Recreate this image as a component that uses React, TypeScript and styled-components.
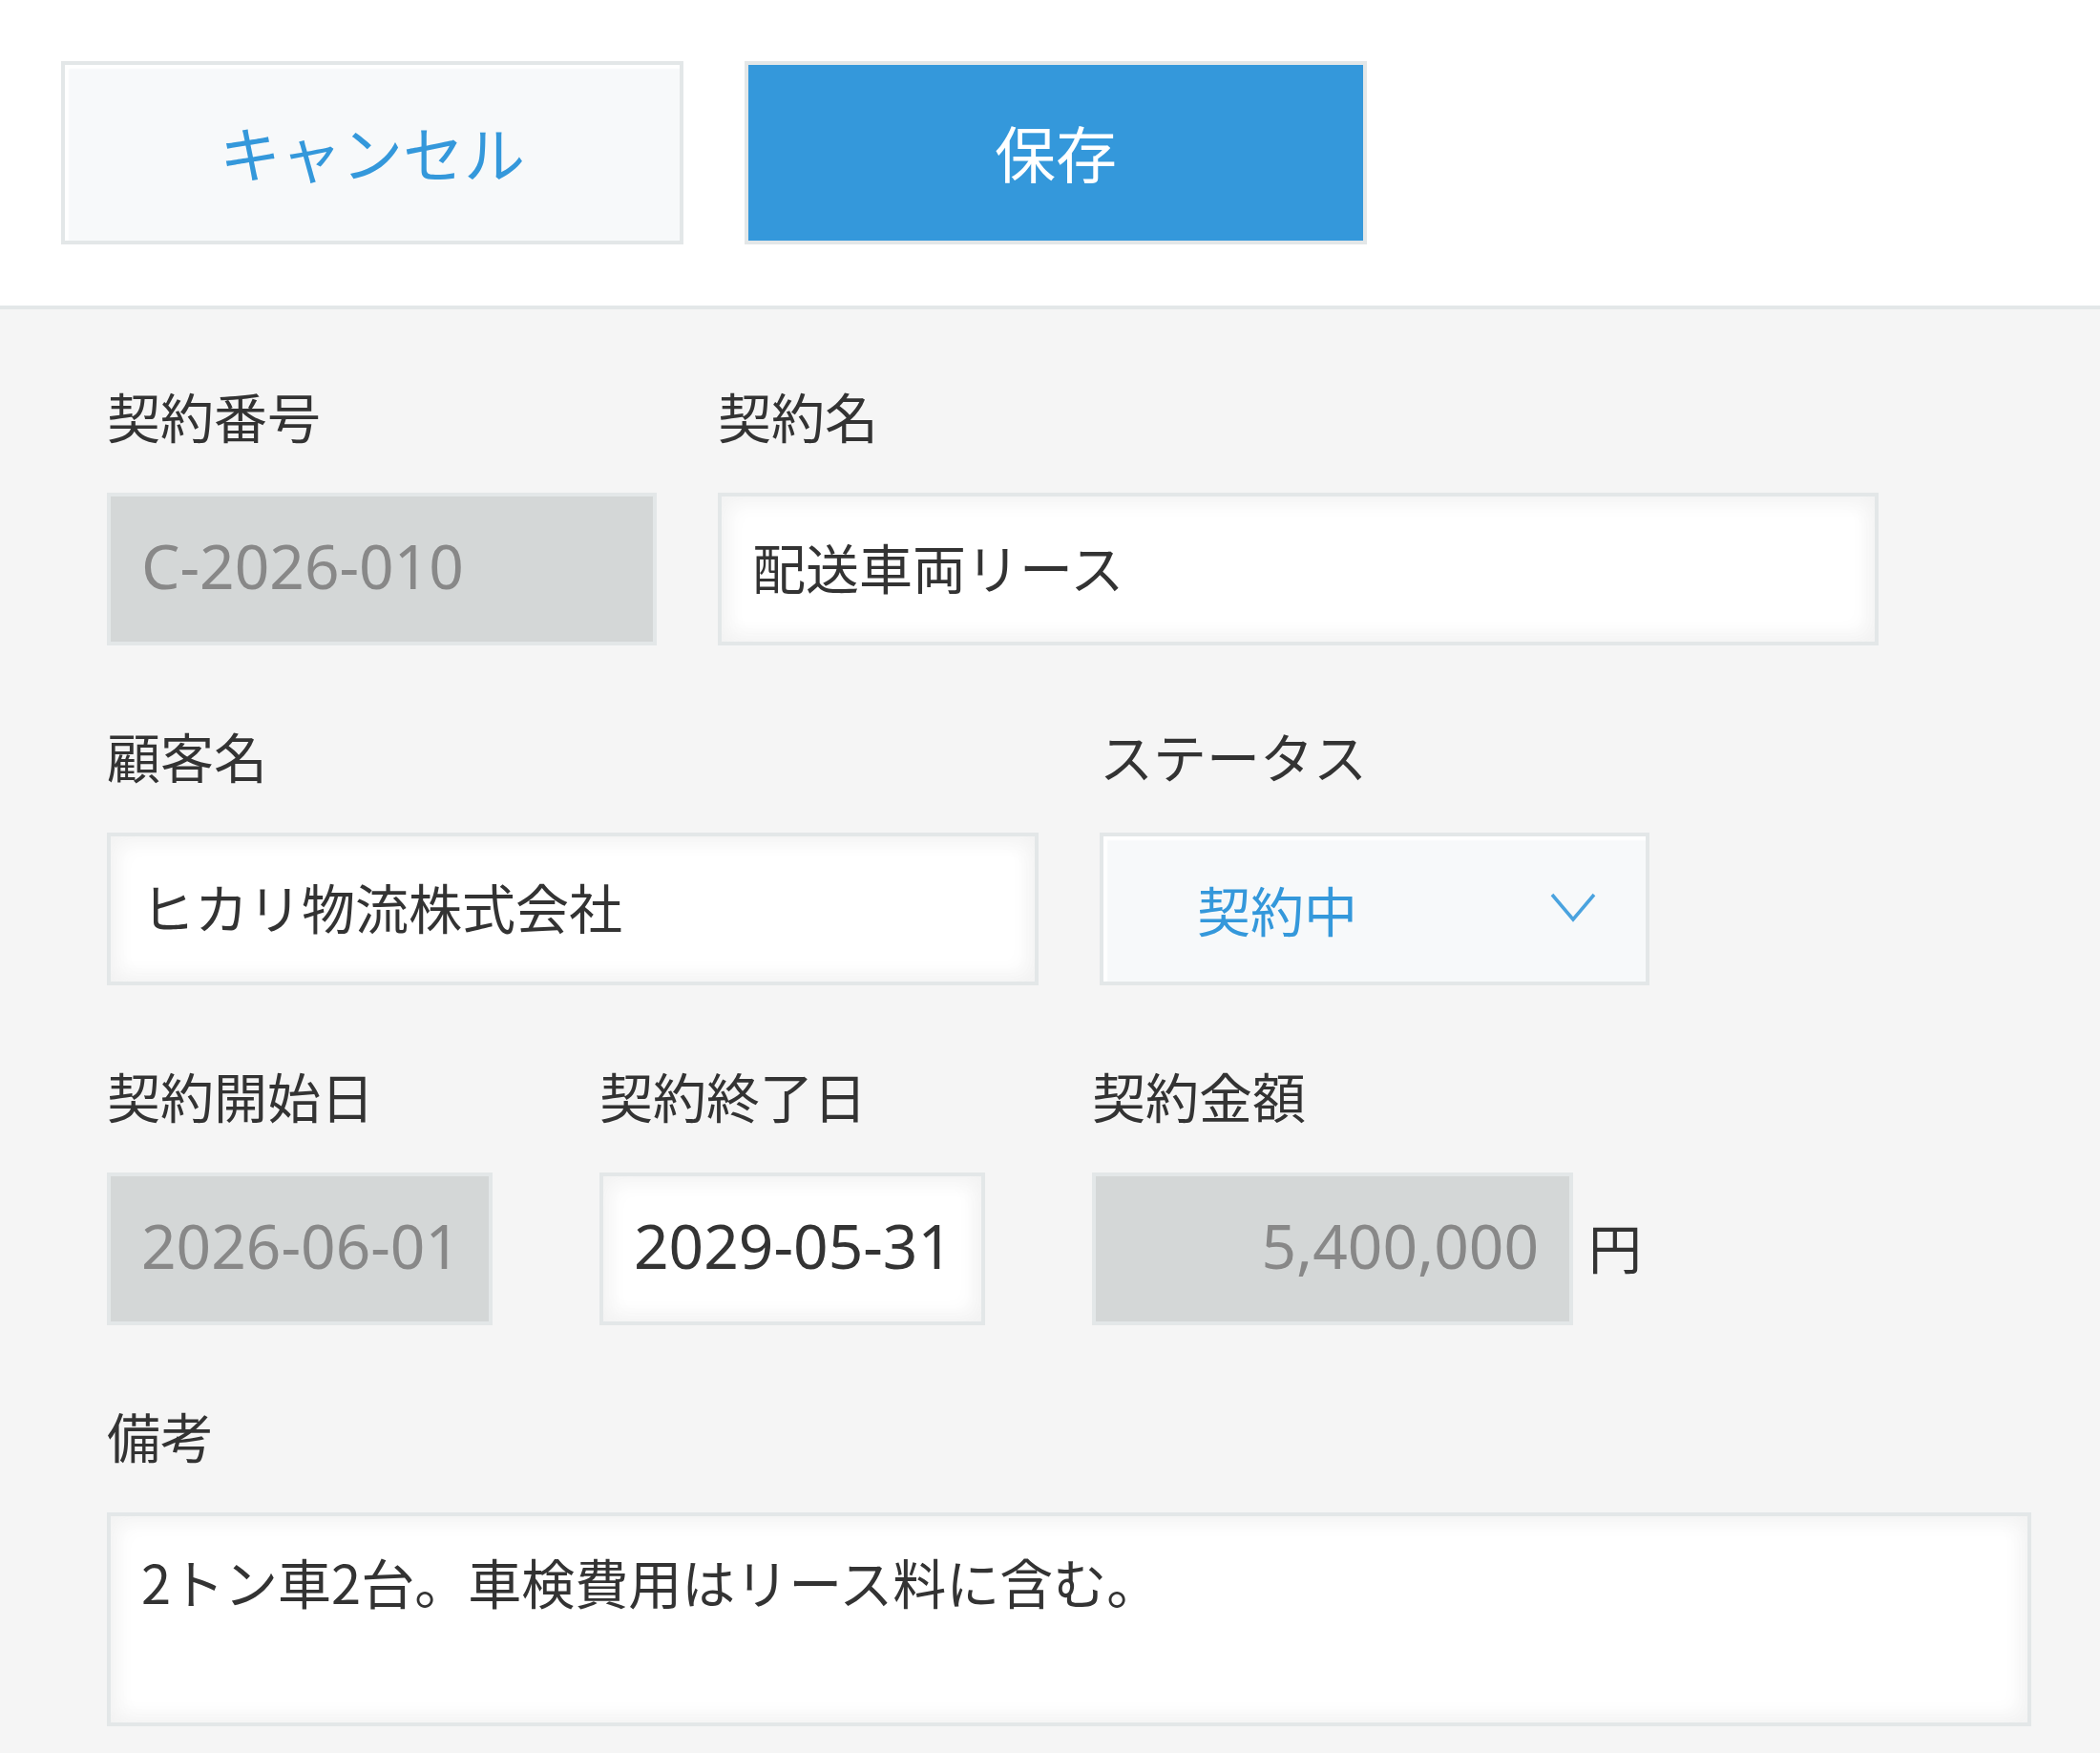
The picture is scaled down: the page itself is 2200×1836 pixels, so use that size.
import { createGlobalStyle, styled } from "styled-components";

const GlobalStyle = createGlobalStyle`
  html, body {
    margin: 0;
    padding: 0;
  }
  body {
    background: #f5f5f5;
    font-family: "Noto Sans CJK JP", "Noto Sans", sans-serif;
    color: #333;
  }
`;

const Page = styled.div`
  width: 2200px;
  min-height: 1836px;
  background: #f5f5f5;
`;

const Toolbar = styled.div`
  display: flex;
  gap: 64px;
  height: 324px;
  box-sizing: border-box;
  padding: 64px 0 0 64px;
  background: #fff;
  border-bottom: 4px solid #e3e7e8;
`;

const ToolButton = styled.button<{ $primary?: boolean }>`
  width: 652px;
  height: 192px;
  box-sizing: border-box;
  padding: 0 0 4px;
  border: 4px solid #e3e7e8;
  background: ${(p) => (p.$primary ? "#3498db" : "#f7f9fa")};
  color: ${(p) => (p.$primary ? "#fff" : "#3498db")};
  box-shadow: ${(p) => (p.$primary ? "none" : "inset 4px 4px 2px #fff")};
  font-family: "Noto Sans CJK JP", sans-serif;
  font-size: 64px;
  line-height: 1;
  cursor: pointer;
`;

const Form = styled.div`
  display: flex;
  flex-direction: column;
  gap: 76px;
  padding: 72px 0 28px 112px;
`;

const Row = styled.div`
  display: flex;
  align-items: flex-start;
  gap: 64px;
`;

const Field = styled.div<{ $width?: number }>`
  display: flex;
  flex-direction: column;
  gap: 36px;
  width: ${(p) => (p.$width ? `${p.$width}px` : "auto")};
`;

const Label = styled.div`
  font-size: 56px;
  line-height: 78px;
  padding-bottom: 6px;
  color: #333;
  white-space: nowrap;
`;

const Control = styled.div`
  display: flex;
  align-items: center;
`;

const Input = styled.div<{ $width: number; $readonly?: boolean; $numeric?: boolean; $right?: boolean }>`
  display: flex;
  align-items: center;
  justify-content: ${(p) => (p.$right ? "flex-end" : "flex-start")};
  width: ${(p) => p.$width}px;
  height: 160px;
  box-sizing: border-box;
  padding: 0 32px 8px;
  border: 4px solid #e3e7e8;
  background: ${(p) => (p.$readonly ? "#d4d7d7" : "#fff")};
  color: ${(p) => (p.$readonly ? "#888" : "#333")};
  box-shadow: ${(p) =>
    p.$readonly
      ? "none"
      : "inset 4px 4px 24px #f2f2f2, inset -4px -4px 24px #f2f2f2"};
  font-family: ${(p) =>
    p.$numeric ? '"Noto Sans", "Noto Sans CJK JP", sans-serif' : '"Noto Sans CJK JP", sans-serif'};
  font-size: ${(p) => (p.$numeric ? "64px" : "56px")};
  white-space: nowrap;
`;

const Select = styled.div`
  display: flex;
  align-items: center;
  justify-content: space-between;
  width: 576px;
  height: 160px;
  box-sizing: border-box;
  padding: 0 52px 2px 98px;
  border: 4px solid #e3e7e8;
  background: #f7f9fa;
  box-shadow: inset 4px 4px 2px #fff;
  color: #3498db;
  font-size: 56px;
`;

const Unit = styled.span`
  margin-left: 16px;
  padding-bottom: 8px;
  font-size: 56px;
  color: #333;
`;

const TextArea = styled.div`
  width: 2016px;
  height: 224px;
  box-sizing: border-box;
  padding: 26px 32px 32px;
  border: 4px solid #e3e7e8;
  background: #fff;
  box-shadow: inset 4px 4px 24px #f2f2f2, inset -4px -4px 24px #f2f2f2;
  font-size: 56px;
  line-height: 84px;
  color: #333;
`;

function Chevron() {
  return (
    <svg width="48" height="32" viewBox="0 0 48 32">
      <polyline
        points="2,2 24,28 46,2"
        fill="none"
        stroke="#4aa3df"
        strokeWidth="3.5"
      />
    </svg>
  );
}

export default function App() {
  return (
    <Page>
      <GlobalStyle />
      <Toolbar>
        <ToolButton>キャンセル</ToolButton>
        <ToolButton $primary>保存</ToolButton>
      </Toolbar>
      <Form>
        <Row>
          <Field>
            <Label>契約番号</Label>
            <Input $width={576} $readonly $numeric>
              C-2026-010
            </Input>
          </Field>
          <Field>
            <Label>契約名</Label>
            <Input $width={1216}>配送車両リース</Input>
          </Field>
        </Row>
        <Row>
          <Field>
            <Label>顧客名</Label>
            <Input $width={976}>ヒカリ物流株式会社</Input>
          </Field>
          <Field>
            <Label>ステータス</Label>
            <Select>
              <span>契約中</span>
              <Chevron />
            </Select>
          </Field>
        </Row>
        <Row>
          <Field $width={452}>
            <Label>契約開始日</Label>
            <Input $width={404} $readonly $numeric>
              2026-06-01
            </Input>
          </Field>
          <Field $width={452}>
            <Label>契約終了日</Label>
            <Input $width={404} $numeric>
              2029-05-31
            </Input>
          </Field>
          <Field>
            <Label>契約金額</Label>
            <Control>
              <Input $width={504} $readonly $numeric $right>
                5,400,000
              </Input>
              <Unit>円</Unit>
            </Control>
          </Field>
        </Row>
        <Row>
          <Field>
            <Label>備考</Label>
            <TextArea>2トン車2台。車検費用はリース料に含む。</TextArea>
          </Field>
        </Row>
      </Form>
    </Page>
  );
}
